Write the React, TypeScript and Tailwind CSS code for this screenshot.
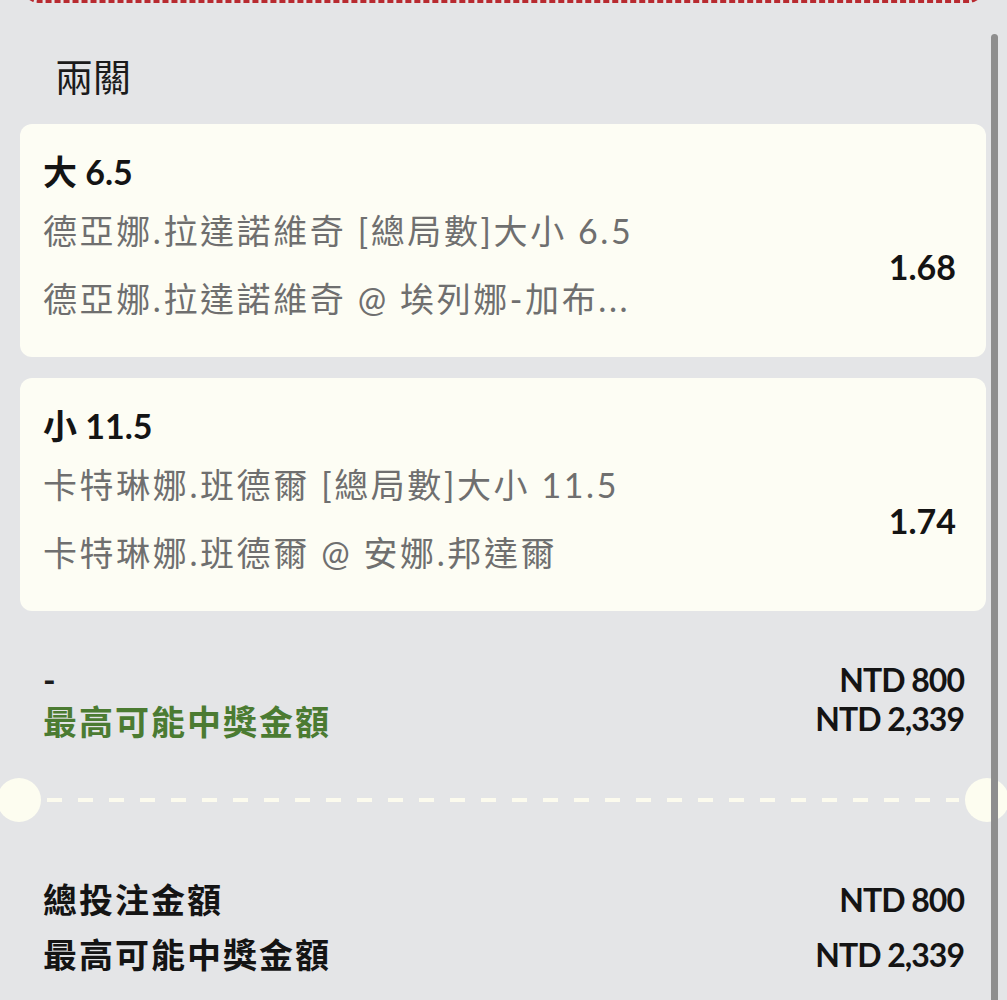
import React from 'react'

const font = "font-['Lato','Noto_Sans_CJK_TC',sans-serif]"

type Leg = { pick: string; market: string; match: string; odds: string }

const legs: Leg[] = [
  {
    pick: '大 6.5',
    market: '德亞娜.拉達諾維奇 [總局數]大小 6.5',
    match: '德亞娜.拉達諾維奇 @ 埃列娜-加布...',
    odds: '1.68',
  },
  {
    pick: '小 11.5',
    market: '卡特琳娜.班德爾 [總局數]大小 11.5',
    match: '卡特琳娜.班德爾 @ 安娜.邦達爾',
    odds: '1.74',
  },
]

function LegCard({ leg }: { leg: Leg }) {
  return (
    <div className="rounded-[12px] bg-[#fdfdf4] pl-[23px] pr-[30px] pt-[23px] pb-[24px]">
      <div className="text-[34px] font-bold leading-[50px] text-[#141414]">{leg.pick}</div>
      <div className="flex items-center justify-between">
        <div className="min-w-0 text-[34px] leading-[68px] tracking-[2.6px] text-[#6f6f6f]">
          <div className="truncate">{leg.market}</div>
          <div className="truncate">{leg.match}</div>
        </div>
        <div className="mt-[3px] text-[34px] font-bold text-[#141414]">{leg.odds}</div>
      </div>
    </div>
  )
}

export default function App() {
  return (
    <div className={`${font} relative h-[1000px] w-full overflow-hidden bg-[#e4e5e7]`}>
      {/* bottom of the previous ticket */}
      <div className="mx-[24px] -mt-[34px] h-[37px] rounded-[14px] border-[3px] border-dashed border-[#b82a30]" />

      <div className="px-[20px] pr-[21px]">
        <div className="mt-[49px] pl-[35px] text-[38px] leading-[48px] text-[#1b1b1b]">兩關</div>

        <div className="mt-[24px] flex flex-col gap-[21px]">
          {legs.map((leg) => (
            <LegCard key={leg.pick} leg={leg} />
          ))}
        </div>

        <div className="mt-[48px] flex justify-between px-[23px] pr-[22px]">
          <div className="text-[34px] font-bold leading-[42px]">
            <div className="text-[#1b1b1b]">-</div>
            <div className="tracking-[2px] text-[#4b7b32]">最高可能中獎金額</div>
          </div>
          <div className="text-right text-[32px] font-bold leading-[42px] tracking-[-1px] text-[#141414]">
            <div>NTD 800</div>
            <div className="-mt-[3px]">NTD 2,339</div>
          </div>
        </div>
      </div>

      <div className="mt-[35px] flex h-[44px] items-center">
        <div className="-ml-[3px] h-[44px] w-[44px] shrink-0 rounded-full bg-[#fdfdf0]" />
        <div className="mx-[6px] h-[4px] flex-1 bg-[repeating-linear-gradient(90deg,#fcfbee_0_15px,transparent_15px_31px)]" />
        <div className="-mr-[2px] h-[44px] w-[44px] shrink-0 rounded-full bg-[#fdfdf0]" />
      </div>

      <div className="mt-[50px] flex justify-between pl-[43px] pr-[43px] text-[#141414]">
        <div className="text-[34px] font-bold leading-[55px] tracking-[2px]">
          <div>總投注金額</div>
          <div>最高可能中獎金額</div>
        </div>
        <div className="text-right text-[32px] font-bold leading-[55px] tracking-[-1px]">
          <div>NTD 800</div>
          <div>NTD 2,339</div>
        </div>
      </div>

      {/* scrollbar */}
      <div className="absolute right-[9px] top-[34px] h-[980px] w-[7px] rounded-full bg-[#8e8e8e]" />
    </div>
  )
}
